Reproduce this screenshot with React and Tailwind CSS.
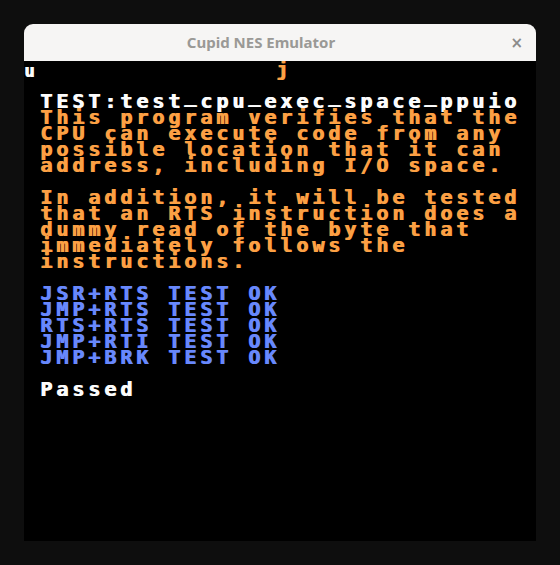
import React from 'react';

const WHITE = 'text-[#fcfcfc]';
const ORANGE = 'text-[#fca044]';
const BLUE = 'text-[#6888fc]';

const rows = [
    null,
    { text: 'TEST:test_cpu_exec_space_ppuio', color: WHITE },
    { text: 'This program verifies that the', color: ORANGE },
    { text: 'CPU can execute code from any', color: ORANGE },
    { text: 'possible location that it can', color: ORANGE },
    { text: 'address, including I/O space.', color: ORANGE },
    null,
    { text: 'In addition, it will be tested', color: ORANGE },
    { text: 'that an RTS instruction does a', color: ORANGE },
    { text: 'dummy read of the byte that', color: ORANGE },
    { text: 'immediately follows the', color: ORANGE },
    { text: 'instructions.', color: ORANGE },
    null,
    { text: 'JSR+RTS TEST OK', color: BLUE },
    { text: 'JMP+RTS TEST OK', color: BLUE },
    { text: 'RTS+RTS TEST OK', color: BLUE },
    { text: 'JMP+RTI TEST OK', color: BLUE },
    { text: 'JMP+BRK TEST OK', color: BLUE },
    null,
    { text: 'Passed', color: WHITE },
];

// one 8x8 tile, drawn at 2x; the underscore sits on the baseline like the NES font
function Cell({ ch }) {
    if (ch === '_') {
        return <span className="block w-4 h-4 leading-[4px]">_</span>;
    }
    return (
        <span className="block w-4 h-4">
            {ch === ' ' ? '\u00a0' : ch}
        </span>
    );
}

function TextRow({ text, color }) {
    return (
        <div className={`flex h-4 pl-4 whitespace-pre ${color}`}>
            {text.split('').map((ch, i) => (
                <Cell key={i} ch={ch} />
            ))}
        </div>
    );
}

export default function App() {
    return (
        <div className="w-[560px] h-[565px] bg-[#0e0e0e] pt-6 px-6">
            <div className="w-[512px]">
                <div className="relative h-[37px] rounded-t-[9px] bg-[#f6f5f4] flex items-center justify-center pr-[38px]">
                    <span className="font-['Noto_Sans',sans-serif] font-bold text-[15px] text-[#9a9996]">
                        Cupid NES Emulator
                    </span>
                    <span className="absolute right-[13px] top-[12px] font-['DejaVu_Sans',sans-serif] font-bold text-[15px] leading-none text-[#8b8b8b]">
                        ×
                    </span>
                </div>
                <div className="h-[480px] bg-black font-['DejaVu_Sans_Mono',monospace] font-bold text-[20px] leading-4 [text-shadow:1px_0_0_currentColor]">
                    <div className="flex h-4">
                        <span className="block w-2 h-4 text-[17px] leading-[20px] text-[#fcfcfc]">u</span>
                        <span className="block w-[244px]" />
                        <span className="block w-4 h-4 text-[#fca044]">j</span>
                    </div>
                    {rows.map((r, i) =>
                        r ? <TextRow key={i} text={r.text} color={r.color} /> : <div key={i} className="h-4" />
                    )}
                </div>
            </div>
        </div>
    );
}
